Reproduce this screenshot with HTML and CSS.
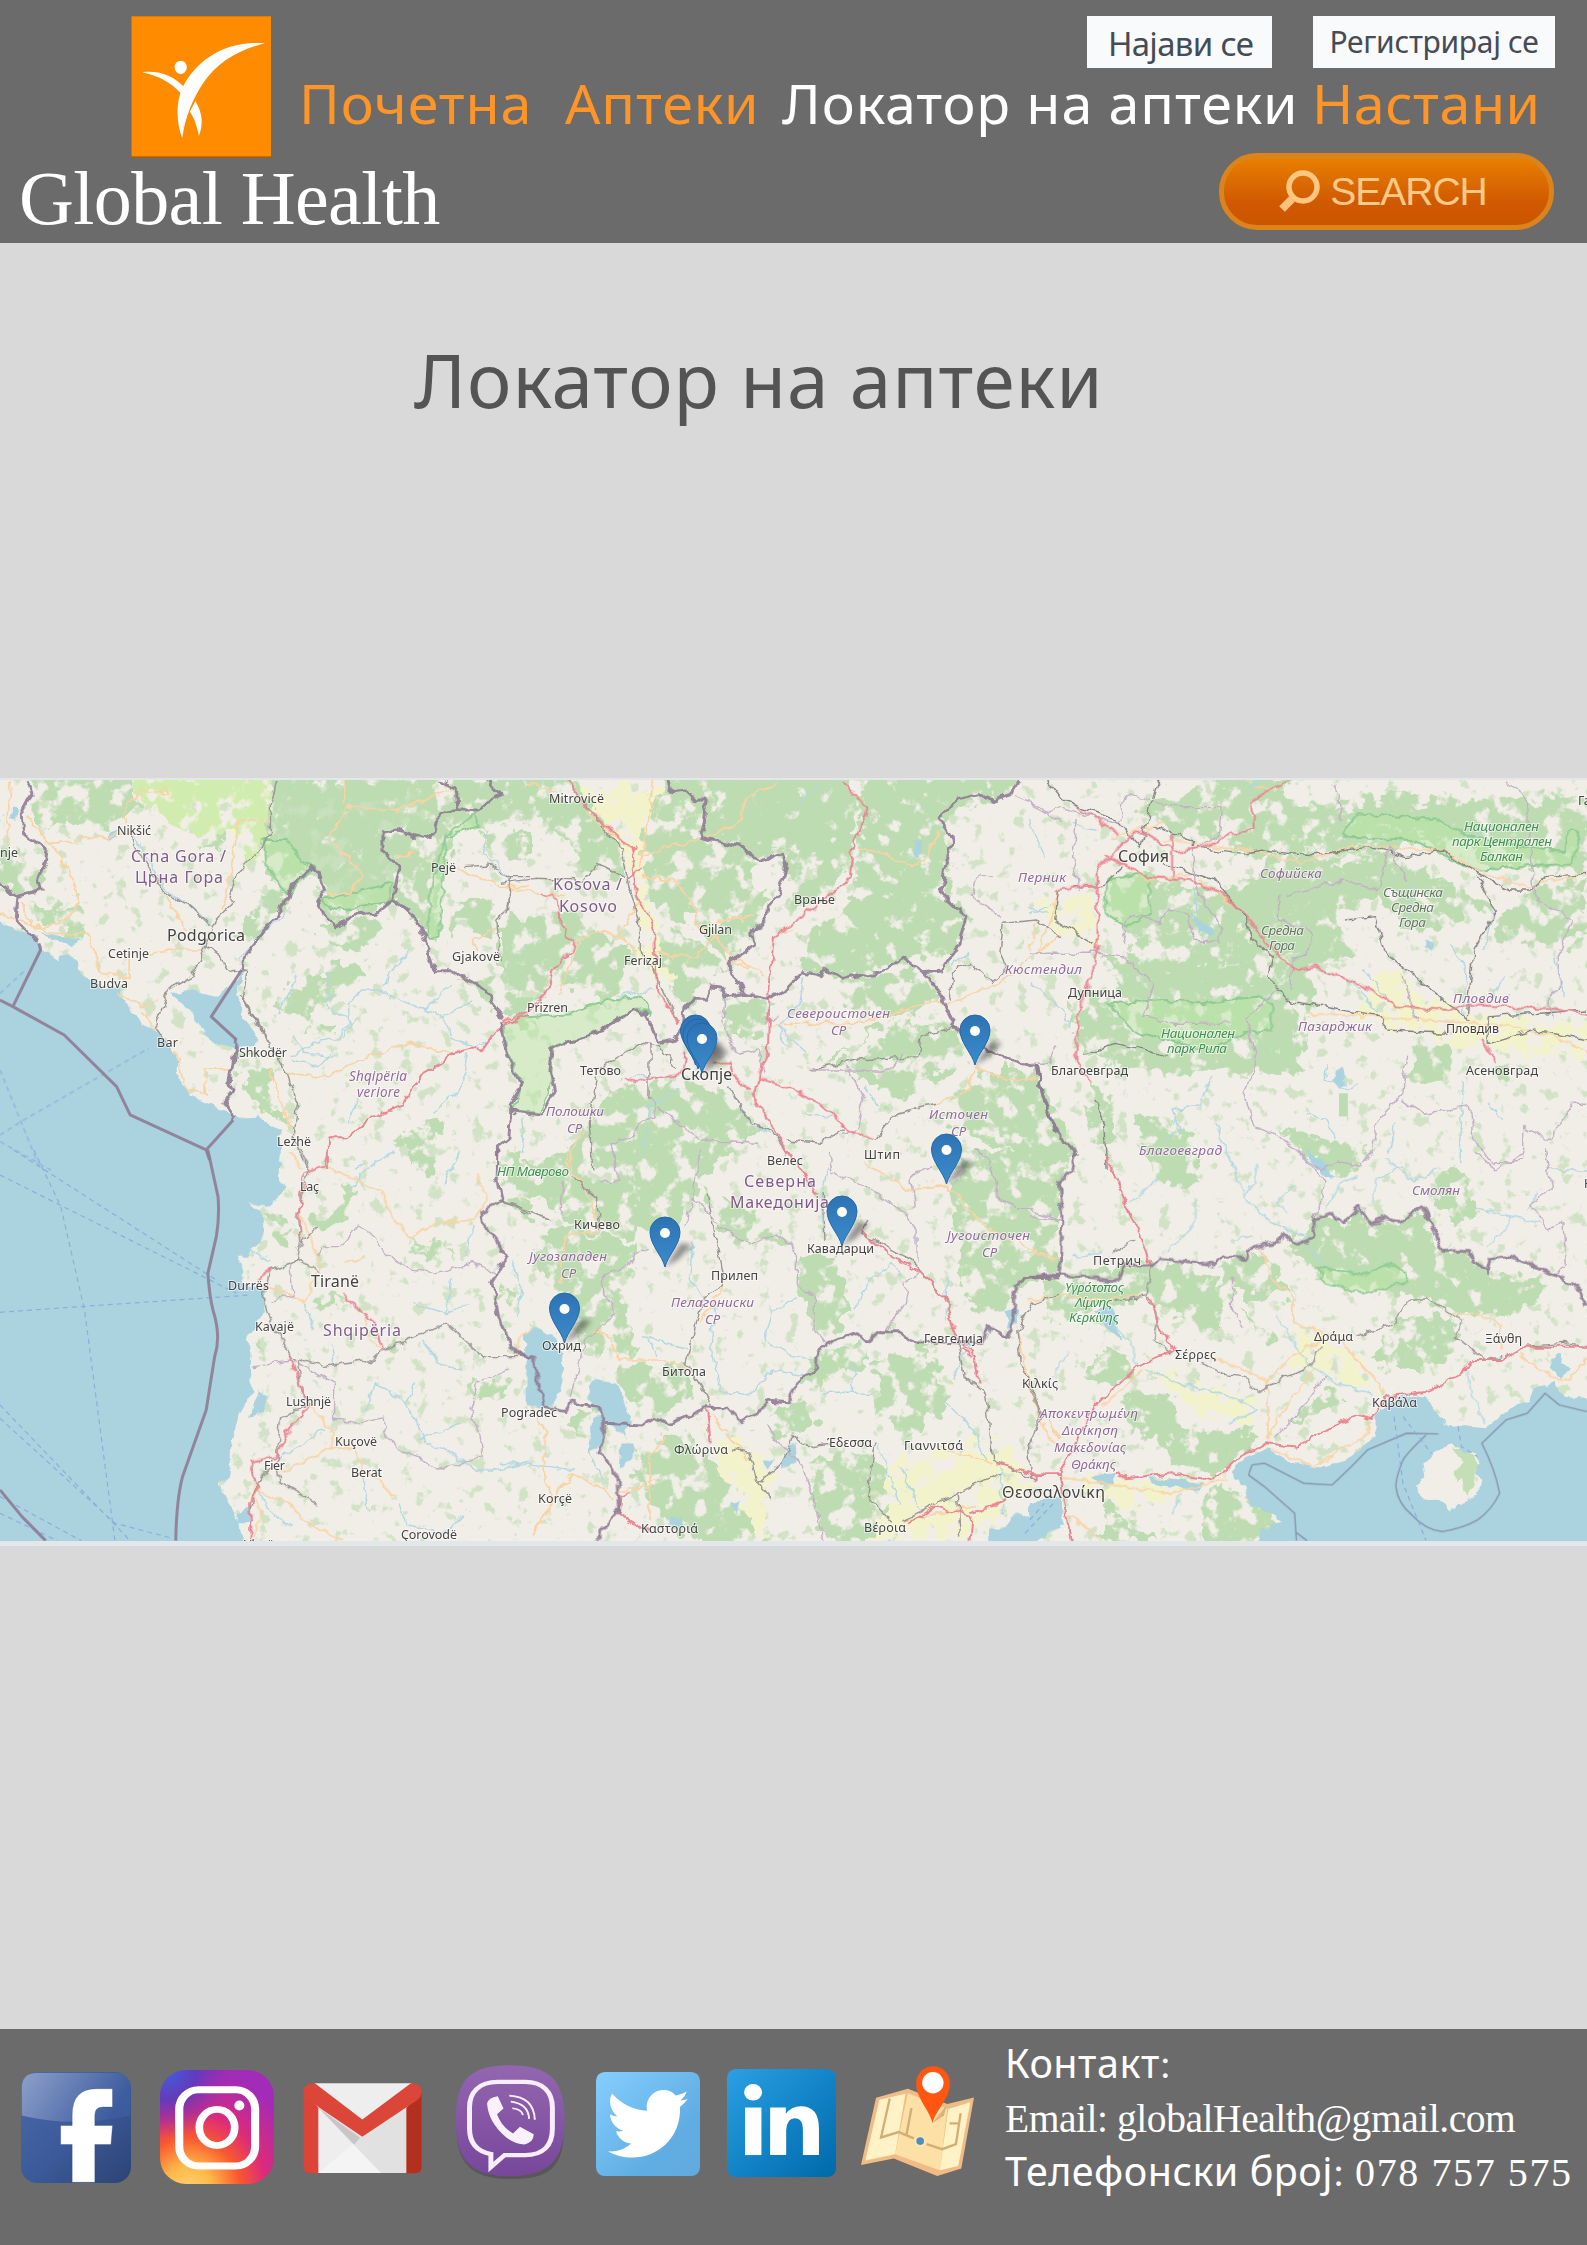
FILE: index.html
```html
<!DOCTYPE html>
<html lang="mk">
<head>
<meta charset="utf-8">
<title>Global Health – Локатор на аптеки</title>
<link rel="stylesheet" href="styles.css">
</head>
<body>
<header class="site-header">
  <div class="brand">
    <svg class="logo" viewBox="259 48 278 426" preserveAspectRatio="none">
      <rect x="259" y="48" width="278" height="426" fill="#a85d08"/>
      <rect x="260" y="49" width="275" height="420" fill="#ff8b00"/>
      <ellipse cx="357" cy="202" rx="12" ry="20" fill="#fff"/>
      <path d="M523 130C440 118 385 190 362 258C348 300 347 365 360 414C366 350 380 300 400 252C430 185 470 150 523 130Z" fill="#fff"/>
      <path d="M281 217C315 210 345 230 364 262L357 280C340 250 315 228 281 217Z" fill="#fff"/>
      <path d="M386 303C400 340 402 370 393 408C388 370 382 350 375 335Z" fill="#fff"/>
    </svg>
    <div class="brand-name">Global Health</div>
  </div>
  <div class="header-main">
    <div class="account"><a class="login">Најави се</a><a class="register">Регистрирај се</a></div>
    <nav class="nav"><a class="n1">Почетна</a><a class="n2">Аптеки</a><a class="n3 active">Локатор на аптеки</a><a class="n4">Настани</a></nav>
    <button class="search">
      <svg viewBox="0 0 42 43"><circle cx="25" cy="17" r="14" fill="none" stroke="#ffc681" stroke-width="5.5"/><path d="M14 29L4 39" stroke="#ffc27a" stroke-width="8"/></svg>
      <span>SEARCH</span>
    </button>
  </div>
</header>
<main>
  <h1>Локатор на аптеки</h1>
  <svg class="map" viewBox="0 778 1587 768">
    <defs>
      <filter id="rough" filterUnits="userSpaceOnUse" x="0" y="770" width="1587" height="780">
        <feTurbulence type="fractalNoise" baseFrequency=".06" numOctaves="3" seed="4" result="n"/>
        <feDisplacementMap in="SourceGraphic" in2="n" scale="30" xChannelSelector="R" yChannelSelector="G" result="d"/>
        <feTurbulence type="fractalNoise" baseFrequency=".055" numOctaves="5" seed="9"/>
        <feColorMatrix values="0 0 0 0 0  0 0 0 0 0  0 0 0 0 0  9 0 0 0 -3.3" result="h"/>
        <feComposite in="d" in2="h" operator="in"/>
      </filter>
      <filter id="dense" filterUnits="userSpaceOnUse" x="0" y="770" width="1587" height="780">
        <feTurbulence type="fractalNoise" baseFrequency=".09" numOctaves="3" seed="4" result="n"/>
        <feDisplacementMap in="SourceGraphic" in2="n" scale="22" xChannelSelector="R" yChannelSelector="G" result="d"/>
        <feTurbulence type="fractalNoise" baseFrequency=".06" numOctaves="5" seed="21"/>
        <feColorMatrix values="0 0 0 0 0  0 0 0 0 0  0 0 0 0 0  9 0 0 0 -2.7" result="h"/>
        <feComposite in="d" in2="h" operator="in"/>
      </filter>
      <filter id="specks" filterUnits="userSpaceOnUse" x="0" y="770" width="1587" height="780">
        <feTurbulence type="fractalNoise" baseFrequency=".07" numOctaves="4" seed="33"/>
        <feColorMatrix values="0 0 0 0 0  0 0 0 0 0  0 0 0 0 0  9 0 0 0 -5.5" result="h"/>
        <feComposite in="SourceGraphic" in2="h" operator="in"/>
      </filter>
      <filter id="wiggle" filterUnits="userSpaceOnUse" x="0" y="770" width="1587" height="780">
        <feTurbulence type="fractalNoise" baseFrequency=".09" numOctaves="2" seed="2"/>
        <feDisplacementMap in="SourceGraphic" scale="9" xChannelSelector="R" yChannelSelector="G"/>
      </filter>
      <linearGradient id="pinfill" x1="0" y1="0" x2="0" y2="1"><stop offset="0" stop-color="#2e73b4"/><stop offset="1" stop-color="#3a8ccb"/></linearGradient>
      <filter id="soft"><feGaussianBlur stdDeviation="2.5"/></filter>
      <g id="pin">
        <path d="M0 0L16-24L27-22L14-8Z" fill="#333" opacity=".5" filter="url(#soft)"/>
        <path d="M0 0C-3-12-15-22-15-35A15 15 0 0 1 15-35C15-22 3-12 0 0Z" fill="url(#pinfill)" stroke="#2567a5"/>
        <circle cy="-34" r="5" fill="#fff"/>
      </g>
    </defs>
    <rect y="778" width="1587" height="768" fill="#e3e7e9"/>
    <svg x="0" y="780" width="1587" height="761" viewBox="0 780 1587 761">
    <rect y="780" width="1587" height="761" fill="#f1eee8"/>
    <rect class="specks" y="775" width="1587" height="770" filter="url(#specks)"/>

    <g class="farm" filter="url(#rough)">
      <g transform="translate(0 770) scale(.338 .3333)"><path d="M400 30H800V180L700 200 560 160Z"/></g>
      <g transform="translate(500 770) scale(.3571 .3333)"><path d="M180 50L460 40 400 300 420 440 560 580 470 640 380 560 400 450 340 240Z"/></g>
      <g transform="translate(500 1150) scale(.3571 .3333)"><path d="M600 860L760 930 740 1172 640 1172ZM1050 950L1400 860 1500 1000 1300 1172 1000 1172Z"/></g>
      <g transform="translate(1030 770) scale(.3552 .3333)"><path d="M20 380L190 370 180 520 60 500ZM560 470L620 460 680 560 600 520ZM1000 600L1250 740 1568 760 1568 860 1250 830 900 740Z"/></g>
      <g transform="translate(1030 1150) scale(.3552 .3333)"><path d="M330 660L640 740 620 820 480 800ZM750 520L880 590 1000 740 850 690 740 640ZM100 980L500 1000 300 1080Z"/></g>
    </g>

    <g class="wood" filter="url(#rough)">
      <g transform="translate(0 770) scale(.338 .3333)">
        <path d="M90 10H390L400 110 330 170 260 180 200 150 120 190ZM0 230L80 250 130 300 110 350 50 375 0 330ZM700 500L760 400 850 330 840 410 760 510ZM850 650L1000 560 1090 620 900 740 800 700ZM1340 620L1568 640V770L1480 740 1400 650ZM1350 400L1470 380 1460 500 1330 520ZM680 850L770 860 800 950 850 1070 770 1010ZM1180 1100L1300 1050 1280 1180 1200 1170ZM540 150L640 140 660 240 590 240ZM920 760L990 750 980 790 930 790ZM930 480L1100 440 1130 530 1000 540ZM1420 180L1568 190V270L1470 250ZM90 400L250 400 260 500 140 480Z"/>
        <path class="pale" d="M390 10H800V190L740 280 690 170 600 240 540 170 420 120Z"/>
        <path d="M800 0H1568V150L1350 180 1310 300 1300 430 1290 520 1230 460 1170 390 1050 430 990 465 940 400 960 350 920 290 850 380 780 280 790 200Z"/>
      </g>
      <g transform="translate(0 1150) scale(.338 .3333)"><path d="M780 180L830 190 865 300 820 270ZM920 200L980 190 1030 100 1050 210 960 250ZM1475 30L1568 10V200L1500 170ZM1480 400L1520 400 1510 470 1480 450ZM740 550L770 620 750 610ZM1400 700L1500 680 1480 750 1400 740ZM920 440L1010 440 990 470 930 460ZM1200 290L1350 290 1330 340ZM1200 10L1290 40 1270 90ZM1140 570L1190 570 1180 600Z"/></g>
      <g transform="translate(500 770) scale(.3571 .3333)">
        <path d="M0 10H190L340 240 350 330 300 300 120 150 0 120ZM0 440L200 420 370 560 350 620 300 700 200 640 0 740ZM430 460L560 520 640 600 560 650 510 720 460 600ZM640 680L750 700 740 800 650 800ZM950 620L1180 610 1230 690 1160 740 960 700ZM900 880L1090 770 1270 770 1300 880 1180 950 1100 1000 1000 900ZM1380 900L1510 900 1568 1110V1210L1300 1080 1230 1050 1260 990ZM200 1210L200 1110 330 950 520 940 680 990 720 1100 560 1210ZM220 200L340 280 330 330 200 300ZM900 900L1080 820 1100 740Z"/>
        <path d="M400 230L470 0H950L1020 110 990 230 940 350 820 430 800 370 800 270 740 290 700 300 760 400 700 480 640 560 600 530 540 440 430 440Z"/>
      </g>
      <g transform="translate(500 1150) scale(.3571 .3333)"><path d="M0 80L200 0H560L540 180 380 260 200 240 60 110ZM140 230L400 280 330 460 400 610 260 620 170 480 90 300ZM340 640L530 650 520 760 400 800 330 720ZM200 760L280 780V890L210 850ZM560 100L830 280 720 290 600 230ZM830 310L930 310 970 470 940 550 880 540 840 440ZM890 600L1030 580 1040 640 900 700 830 770 830 720ZM1050 650L1200 580 1250 750 1150 860 1060 800ZM1260 110L1290 0 1568 10V360L1520 350 1440 450 1360 510 1270 390 1280 260ZM370 890L520 850 620 960 740 1190H560L400 1050ZM870 940L1000 900 1090 960 1060 1160 900 1190ZM830 760L880 780 860 850 700 840Z"/></g>
      <g transform="translate(1030 770) scale(.3552 .3333)">
        <path d="M0 900L30 930 130 1150 100 1210H0ZM280 110L450 70 530 20H735V110L960 80H1250L1270 220 900 240 620 260 530 220 400 180ZM1200 90L1568 80V300L1300 290 1200 200ZM1290 490L1380 370 1568 330V480L1500 540 1300 500ZM1060 830L1200 800 1180 930 1080 940ZM170 930L240 1000 230 1100 170 1120ZM1300 880L1370 900 1360 950 1310 930Z"/>
        <path d="M230 310L320 320 540 370 700 260 960 240 1200 340 1290 400 1100 490 970 380 860 440 930 560 800 570 790 700 760 910H300L160 850 110 760V690L280 690 200 570 300 560 260 450 210 400Z"/>
      </g>
      <g transform="translate(1030 1150) scale(.3552 .3333)"><path d="M0 0H115L80 100 85 300 0 250ZM20 385L320 345 430 350 570 420 540 510 400 500 330 440 50 520ZM520 320L650 300 740 430 620 460 550 400ZM1140 60L1240 60 1250 200 1200 210 1140 180ZM960 640L1040 500 1200 500V600L1100 680ZM160 600L270 620 280 700 180 700ZM740 810L830 720 890 750 760 810ZM490 1060L540 990 610 1040 710 1110 640 1190H500ZM200 1050L360 1172H200ZM440 500L540 510 520 580ZM580 480L700 560 680 600Z"/></g>
    </g>
    <g class="wood" filter="url(#dense)">
      <g transform="translate(0 770) scale(.338 .3333)"><path d="M810 60L1100 40 1290 60 1260 170 1130 190 1140 240 1180 290 1160 380 1050 420 960 400 950 330 900 280 830 240Z" opacity=".8"/></g>
      <g transform="translate(500 770) scale(.3571 .3333)"><path d="M1020 10L1450 10 1440 70 1250 130 1260 380 1310 440 1280 550 1150 570 960 620 850 600 850 500 990 390 1000 270ZM600 10L950 10 1000 110 970 210 900 220 800 230 680 220 590 170Z"/></g>
      <g transform="translate(1030 770) scale(.3552 .3333)"><path d="M540 380L700 300 850 290 960 260 1180 350 1000 370 860 400 800 460 860 560 660 540 560 430ZM640 700L750 700V910L640 900ZM330 590L600 590 630 680 350 660ZM760 130L950 110 1250 110 1260 220 900 150ZM290 1030L450 1080 460 1210H340ZM700 1060L830 1110 950 1120 930 1180 830 1200 740 1110Z"/></g>
      <g transform="translate(1030 1150) scale(.3552 .3333)"><path d="M800 210L850 195 880 225 930 180 960 225 1040 220 1100 180 1150 300 1240 310 1290 375 1450 390 1440 450 1350 490 1200 490 1070 430 940 430 830 390 730 300ZM300 -10L480 20V100L420 120 360 90ZM800 0H960L930 45 880 85 840 40ZM260 730L400 740 420 850 630 840 610 900 520 980 400 940 370 860 280 850Z"/></g>
    </g>
    <g class="wood"><g transform="translate(1030 770) scale(.3552 .3333)"><path d="M870 970H895V1040H870Z"/></g></g>
    <g class="park" filter="url(#wiggle)">
      <g transform="translate(500 770) scale(.3571 .3333)"><path d="M10 770L60 740 200 730 300 690 400 680 420 730 380 710 270 790 150 830 140 960 110 1030 40 1020 60 930 20 850Z"/></g>
      <g transform="translate(0 770) scale(.338 .3333)"><path d="M780 210L850 210 890 270 930 290 850 370 790 300ZM950 390L1160 340 1150 400 990 420ZM1320 190L1410 130 1410 170 1320 200 1300 500 1260 500 1280 330Z"/></g>
      <g transform="translate(1030 770) scale(.3552 .3333)"><path d="M215 330L330 310 340 430 270 470 210 430ZM220 700L380 690 480 700 640 680 680 700 680 780 600 790 500 840 300 790ZM880 190L920 130 1140 150 1240 200 1500 250 1520 180 1550 190 1530 280 1250 300 1080 210 900 200Z"/></g>
      <g transform="translate(1030 1150) scale(.3552 .3333)"><path d="M810 350L940 380 1000 345 1060 360 1060 400 940 430 830 400Z"/></g>
    </g>

    <g class="water" filter="url(#wiggle)">
      <g transform="translate(0 770) scale(.338 .3333)"><path d="M-30 440L60 480 110 500 120 540 170 570 200 550 230 565 235 610 300 650 355 655 370 700 430 770 470 785 520 850 530 930 560 975 640 1010 690 1045 760 1040 830 1085 825 1200H-30ZM505 670L560 660 640 680 680 650 720 600 700 680 720 740 755 790 755 828 690 835 640 820 600 790 560 720ZM110 490L200 500 240 510 210 525 150 505ZM320 190L350 180 345 205 320 205ZM35 110L55 120 50 160 35 140Z"/></g>
      <g transform="translate(0 1150) scale(.338 .3333)"><path d="M-30 -20H825L825 90 845 110 800 170 735 155 775 190 780 250 735 320 700 320 720 360 720 400 790 420 780 490 735 560 745 620 735 690 750 720 705 800 680 900 680 970 645 1005 690 1080 725 1200H-30ZM765 720L790 740 780 785 740 798ZM700 1085L745 1075 740 1120 700 1120Z"/></g>
      <g transform="translate(500 770) scale(.3571 .3333)"><path d="M1160 215L1182 210 1175 265 1158 262Z"/></g>
      <g transform="translate(500 1150) scale(.3571 .3333)"><path d="M70 545L100 537 150 560 175 610 172 700 150 765 110 775 72 765ZM245 725L265 690 325 700 350 750 370 820 350 855 300 820 245 745ZM262 800L290 795V880L245 905ZM340 880L375 880 370 930 335 960ZM800 895L825 878 830 940 790 955ZM740 930L765 935 745 960ZM1410 485L1450 470V515L1425 535ZM475 1110L510 1105 505 1130 478 1128ZM650 1060L680 1050 660 1085ZM1370 1195V1135L1420 1130 1430 1100 1500 1090 1520 1050 1568 1040V1130L1480 1195Z"/></g>
      <g transform="translate(1030 770) scale(.3552 .3333)"><path d="M450 430L520 480 515 500 475 488ZM850 935L880 890 890 940 870 962ZM1105 515L1140 520 1125 540ZM740 1135L830 1200H810Z"/></g>
      <g transform="translate(1030 1150) scale(.3552 .3333)"><path d="M0 1060L60 1040 92 1080 90 1120 50 1145H0ZM175 975L240 970V1000L200 1008ZM340 982L490 1000 480 1025 340 1000ZM570 960L600 930 665 895 720 930 810 955 900 920 970 860 970 800 1010 760 1050 740 1115 735 1150 800 1180 825 1280 835 1340 780 1400 760 1420 715 1480 695 1500 740 1600 750 1600 1200H640L650 1140 705 1115 620 1060 610 1010 575 990ZM1465 620L1490 615 1520 660 1500 680 1460 660ZM180 480L230 470 255 570 210 520ZM770 0L810 20 860 85 830 75Z"/><path class="isle" d="M1170 885L1210 890 1225 910 1250 905 1265 935 1250 950 1268 985 1258 1040 1215 1055 1185 1085 1160 1055 1110 1048 1090 1010 1110 980 1105 940 1140 910Z"/><path class="grove" d="M1190 895L1215 900 1250 915 1262 960 1255 1000 1240 1040 1220 1030 1215 990 1200 1000 1195 960 1215 940Z"/></g>
    </g>

    <g class="river" filter="url(#wiggle)">
      <g transform="translate(0 770) scale(.338 .3333)"><path d="M860 860L930 820 1000 800 1035 760 1030 700 1070 660 1130 660 1200 700 1260 720 1310 740 1330 800 1400 830 1440 820M1260 720L1330 640M1310 740L1400 690M970 600L975 720 1030 740M1130 650L1210 540M1440 180L1430 250 1510 320M1380 850L1370 950 1280 1030M1060 980L1030 1060M880 620L820 740M710 560L860 410M400 200L450 290 490 360 560 410 630 470M870 800L900 850 990 860M860 870L940 890 980 850M1060 740L1010 800"/></g>
      <g transform="translate(0 1150) scale(.338 .3333)"><path d="M1170 0L1080 60 1040 120M1360 0L1340 50 1310 110M1110 700L1180 740 1240 820 1260 880 1340 910 1400 960 1460 960 1568 940M1240 870L1360 820M1110 700L1080 790M1050 60L1080 40M1220 460L1320 490 1380 460M1330 380L1320 490M900 460L930 540M1400 230L1380 320M740 300L800 330M820 930L900 880 960 830M1200 760L1230 700M1070 980L1090 1080M750 1000L800 1080 860 1130M1180 1060L1200 1120 1320 1150 1370 1100M980 580L990 640M1250 570L1300 640 1360 660"/></g>
      <g transform="translate(500 770) scale(.3571 .3333)"><path d="M890 50L840 100M850 620L840 700 780 770 800 830M430 660L330 680M420 920L360 920M500 960L420 1010 400 1150M1480 150L1530 270M780 770L860 850M640 950L700 1060 760 1090M1020 950L1060 1010M1550 400L1480 430M60 1040L70 1150M850 1030L930 1040M1320 550L1260 580"/></g>
      <g transform="translate(500 1150) scale(.3571 .3333)"><path d="M920 50L900 150 905 250M540 280L530 390 600 480 590 600 620 730 700 740 760 660 860 680M740 570L760 480 830 450M740 570L820 620 880 630M990 480L1040 390 1100 340 1120 380M1250 380L1250 520M1370 540L1300 600 1270 690M900 730L1040 730M990 640L990 730M1060 880L1120 1070M1120 950L1180 1080M1240 750L1330 840 1360 930M400 560L520 600M420 570L440 620M30 330L60 420 50 500M1400 950L1410 1100M0 940L140 950 210 960M250 900L290 990"/></g>
      <g transform="translate(1030 770) scale(.3552 .3333)"><path d="M0 640L90 720 110 770M480 1000L400 1020 420 1080 380 1110M480 1000L510 920M840 880L830 930 890 960 920 940M780 1030L830 1050 860 1100M900 620L980 730M1000 680L940 600M1180 520L1230 600 1220 740M1300 420L1280 540M1250 200L1300 160M460 350L470 440M120 160L190 180M1080 340L1060 440M520 1060L580 1200M1480 560L1500 680M1220 930L1210 1180M1290 1000L1330 1050M1030 1060L1010 1150M0 410L50 430M1340 620L1290 700M620 60L640 30"/></g>
      <g transform="translate(1030 1150) scale(.3552 .3333)"><path d="M550 0L610 150 680 220 780 260M640 40L630 100 600 140M470 150L460 230 380 310M360 80L280 160M330 660L480 720 600 750 640 780M640 780L560 820M780 280L830 350M690 490L750 590 780 640 860 700 960 730M1230 660L1240 720 1280 820M1050 50L980 80 960 160M1250 170L1350 200 1330 250 1290 290M1350 200L1440 220M1400 180L1430 130M840 170L870 100 920 80M580 270L630 260M240 530L290 590 300 650M110 610L60 680M420 1030L400 1090M1000 30L1080 90 1150 60M720 190L700 150 740 110M1460 60H1568M200 310L120 320"/></g>
    </g>

    <g class="minor" filter="url(#wiggle)">
      <g transform="translate(0 770) scale(.338 .3333)"><path d="M80 140L150 220 310 200 400 190 M370 160L380 100 420 60 490 70 490 40M150 220L210 310 235 400 190 450 110 480 60 400M0 430L60 450 150 490 260 490 300 610 385 625 385 560M440 550L530 540 600 540M550 480L500 390 440 290M350 670L420 710 470 690M460 780L420 730M800 150L700 150 690 260 660 420M980 210L1070 310 1040 370 960 370M970 200L1030 110 1180 120 1330 60M1020 100L1020 30M850 910L970 920 1060 870 1210 820 1340 850M690 900L610 900 610 970 550 960M800 900L860 1080M520 840L550 960 610 970M1410 540L1400 510 1470 470M1350 290L1480 350 1568 350M1170 260L1230 250M30 30L20 220"/></g>
      <g transform="translate(0 1150) scale(.338 .3333)"><path d="M960 50L1060 90 1130 130 1160 200 1210 260 1290 220 1400 210 1440 150 1410 70M890 200L930 290 950 370M760 400L900 455 940 370M1080 500L1090 570 1130 600M910 760L990 850 980 890 830 970M980 890L1050 900 1080 960 1170 1040M760 1020L850 1060 900 1110 1010 1172M1020 340L1080 320M860 0L890 60M1530 620L1540 560 1568 540M750 1000L770 1100 750 1172"/></g>
      <g transform="translate(500 770) scale(.3571 .3333)"><path d="M0 350L100 370 180 380M430 30L410 200 390 290M400 260L460 230 560 210 670 160 690 80 780 40M400 320L490 330 540 400 555 470 600 500 550 560 430 550M600 460L710 430M210 520L290 480 330 500 370 430 390 400M330 500L380 540M600 500L650 560 740 620M1000 240L1080 250 1140 290 1190 270 1230 180M760 770L850 760 1000 760 1200 700 1260 700 1400 640 1568 490M640 570L700 600M170 670L210 520M1330 900L1310 960 1220 1000M1330 890L1450 940 1500 920M240 1080L190 1150 190 1200M780 490L820 480M240 130L380 250M80 40L160 70"/></g>
      <g transform="translate(500 1150) scale(.3571 .3333)"><path d="M200 0V70L240 110 280 240 180 260 165 400M1020 40L1140 120 1250 110 1370 240 1568 330M260 540L310 560 330 630 480 630 530 660M90 770L130 850 120 960 150 1050 90 1160M150 1040L200 970 280 1010 320 1050M590 790L640 860 700 930M460 860L420 920 420 1110M1250 900L1380 940M1330 1070L1130 1110M1450 540L1490 740 1568 870M630 400L560 520M330 1030L440 990"/></g>
      <g transform="translate(1030 770) scale(.3552 .3333)"><path d="M380 210L620 240 760 280 900 230 1160 240 1280 310 1400 350 1568 310M260 280L330 330 460 310M780 730L970 740 1250 760 1350 770 1480 800 1568 850M20 540L60 450 80 360M0 540L20 460M630 50L690 60M230 200L380 160M480 330L600 430"/></g>
      <g transform="translate(1030 1150) scale(.3552 .3333)"><path d="M0 300L70 330M0 450L100 430 150 450 320 440M650 290L690 400 740 430 740 520 830 550 860 550 1000 730M500 620L600 660 670 690 740 620 830 560M800 660L700 800 670 870M670 690L670 870M680 900L800 950 950 850 950 800M1170 490L1290 500 1330 530M1380 610L1460 680 1520 690 1568 620M0 720L50 860 90 890M80 980L200 1000 390 1030 550 990M320 660L260 720 200 770M90 1080L210 1172M1330 600L1320 530"/></g>
    </g>

    <g class="rail" filter="url(#wiggle)">
      <g transform="translate(0 770) scale(.338 .3333)"><path d="M820 30L800 100 800 190 760 250 700 310 680 380 690 400 640 450 600 550 570 620 500 660 460 770 500 830M390 190L400 230 490 370 560 410 620 470M610 530L650 560 680 610 730 600M710 680L780 790 850 910 880 1000 870 1110 910 1200M1370 290L1450 285 1510 320 1568 320M1510 320L1500 420 1470 450 1480 570M730 600L720 690 790 800"/></g>
      <g transform="translate(0 1150) scale(.338 .3333)"><path d="M890 0L915 60 880 200 890 270 880 330 800 360 780 430 790 490 860 620 960 650 1070 630 1090 640 1130 600 1200 570 1320 520 1430 620 1530 620M880 330L950 370M880 630L890 720 920 760 830 800 820 930 760 1000 740 1100M820 960L830 1000 940 1060M890 280L940 235M1490 155L1568 195"/></g>
      <g transform="translate(500 770) scale(.3571 .3333)"><path d="M200 50L340 240 390 470 390 540 430 600 500 760M0 340L100 325 230 330 270 280 350 320M30 330L20 430M640 950L700 1060 760 1080 800 1150M270 920L250 1060 260 1200M270 900L400 820 450 830 490 890M1050 1110L1110 1030 1220 1000M800 1110L900 1120 960 1080M420 820V990M1280 770L1180 800 1170 860 1000 870 870 900M1410 460L1400 540 1420 600 1380 640 1320 580 1270 600 1260 690M1410 460L1500 450 1568 500"/></g>
      <g transform="translate(500 1150) scale(.3571 .3333)"><path d="M200 80L270 140 280 240M580 130L630 400 570 440 520 640 600 780M650 900L700 910 720 1000 760 1050M720 1000L790 940 820 860 860 890 920 880M1050 880L1030 1040 1100 1120M1280 570L1300 680 1360 730 1380 930 1500 990M1400 970L1280 1030 1290 1160M1130 1110L1280 1030M1568 430L1490 460 1450 540 1460 640 1520 800 1480 890 1490 990M910 270L905 130M0 150L140 210M1030 210L1010 250 1150 330 1250 450"/></g>
      <g transform="translate(1030 770) scale(.3552 .3333)"><path class="dark" d="M50 30L95 90 240 150 310 230 360 30M370 280L520 330 610 450 620 500 680 560 670 620 720 690 980 740 1010 780 1170 790M470 230L600 250 660 240 800 255 950 230 1060 260 1160 240 1260 310 1350 360 1410 360 1450 320 1568 310M1230 750L1250 540 1310 420 1260 320M1290 740V820L1420 780 1568 810M150 850L240 820 390 860M180 990L210 1060 220 1200M460 230V210L350 170M80 360L70 450 180 520M1290 740L1568 720M120 350H200L260 290M890 450L970 440 1000 550 1150 680 1240 750"/></g>
      <g transform="translate(1030 1150) scale(.3552 .3333)"><path d="M340 350L330 440 360 500 350 570 400 610M240 455L330 440M480 640L550 670 610 680 640 730 720 680 780 660 820 590M920 560L1020 520 1070 450 1120 450 1220 510 1200 560 1280 630 1330 620M290 270L230 310M1390 590L1500 580 1568 590M0 720L30 790 0 890"/></g>
    </g>

    <g class="region" filter="url(#wiggle)">
      <g transform="translate(0 1150) scale(.338 .3333)"><path d="M940 320L950 290 1010 290 1060 225 1100 250 1140 310 1210 360 1280 370 1400 340 1470 380M750 650L880 630M880 640L990 700 990 810 1060 820 1130 800 1140 850 1180 900 1240 920 1290 960 1430 920 1420 850 1390 780 1410 700 1500 660M860 340L870 440 800 450"/></g>
      <g transform="translate(500 770) scale(.3571 .3333)"><path d="M630 680L620 750 660 850 720 840 740 910M970 890L1020 980 1000 1080 960 1090M420 970L440 1040 400 1050 370 1100 310 1120 330 1200M440 1010L560 1110 720 1120M1450 80L1510 110 1568 160M1380 320L1340 310 1320 380 1400 440M780 740L740 760M1130 850L1090 900 870 900"/></g>
      <g transform="translate(500 1150) scale(.3571 .3333)"><path d="M560 0L540 140 520 230M540 140L620 230 700 280 770 250 830 300 830 400 880 440 880 540 910 580M920 0L930 70 1030 110 1120 180 1165 240 1165 330M1180 370L1130 400 1140 450 1080 540M1160 170L1150 80 1210 50M1330 0L1370 30 1400 150 1480 180 1568 210M420 290L380 310 360 350 290 370 290 430 330 490 240 570 200 740M180 90L170 190M750 820L780 880 850 950 880 1060 910 1172M280 100L330 90 320 0"/></g>
      <g transform="translate(1030 770) scale(.3552 .3333)"><path d="M0 100L40 130 70 110 200 150 250 160 270 70 390 110 540 110 530 200 460 240 470 360 540 480 530 520 460 510 440 430 390 420 370 460 290 430 260 470 270 520M190 550L260 560 350 640 320 740 400 760 560 760M700 370L700 450 750 470 800 490 780 550 740 570 730 640 740 660M690 660L610 750 640 870 600 970 630 1070 700 1100 820 1200M860 40L880 150M720 380L880 330 980 360 1010 230 1060 340M1340 30L1400 90 1420 380 1530 450 1490 540 1490 650 1460 680 1470 740M1050 620L1090 760M1060 860L1050 970 980 1050 960 1150M1050 990L1110 1030 1240 1010 1250 1110 1300 1180 1390 1170 1390 1070 1460 1110M1460 1110L1530 1000 1568 1000M130 150L120 260 140 360M0 550L190 550M0 880L50 880 70 830"/></g>
      <g transform="translate(1030 1150) scale(.3552 .3333)"><path d="M750 0L830 90 820 160 800 200M820 60L870 30 930 50 960 0M1250 0L1310 60 1390 10M1450 0L1470 120 1410 160 1460 240 1500 220 1510 340 1480 380M570 380L570 480 600 530M0 200L80 210M830 680L760 780 690 860"/></g>
    </g>
    <g class="region">
      <g transform="translate(1030 1150) scale(.3552 .3333)"><path class="sealine" d="M1150 852L1060 850 950 900 900 955 850 1005 770 1000 660 940 625 945 615 975 660 1010 745 1090 750 1172M750 1148L780 1172M1115 855Q1060 910 1050 930Q1030 980 1030 1010Q1035 1060 1075 1095Q1115 1140 1160 1145Q1220 1135 1260 1110Q1300 1080 1322 1030Q1310 960 1272 880L1340 810 1400 790 1450 730 1490 765 1568 785"/></g>
    </g>

    <g class="motorway" filter="url(#wiggle)">
      <g transform="translate(0 770) scale(.338 .3333)"><path d="M970 1200V1105H1020L1100 1040 1190 1010 1240 920 1310 880 1340 850 1400 830 1420 850 1470 780 1568 730"/></g>
      <g transform="translate(0 1150) scale(.338 .3333)"><path d="M970 0L960 50 900 70 885 180 890 270M1010 430L1060 480 1110 520 1130 600M910 770L850 850 820 920 740 935 750 980 760 1020 740 1060 745 1172M860 620L900 740M800 360L760 390"/></g>
      <g transform="translate(500 770) scale(.3571 .3333)"><path d="M190 30L240 110 370 240 385 225M370 230L380 370 430 470 440 660 500 760M355 325L400 295M120 370L165 390 170 470 210 530 150 600 140 650 80 720 0 765M960 30L1030 115 990 220 980 320 930 370 770 500 755 650 750 850 720 930 710 980 760 1060 800 1150M350 920L380 940 420 925 510 915 520 840M600 880L645 880 650 910 700 965M720 920L830 960 920 1020 970 1080 1045 1110"/></g>
      <g transform="translate(500 1150) scale(.3571 .3333)"><path d="M800 0L890 130M1010 240L1070 300 1180 370 1250 450 1275 560 1330 620 1340 700M580 775L590 880M360 1030L340 1040 335 1090 420 1150M1390 940L1490 970 1568 970M1500 1000V970M1140 1120L1220 1070 1320 1100 1315 1172M1320 1090L1420 1050M1290 590L1320 620"/></g>
      <g transform="translate(1030 770) scale(.3552 .3333)"><path d="M740 30L650 70 625 100 630 180 570 190 500 230 410 245 370 220 330 190 290 190 250 230 230 260 190 290 190 520 175 610 135 740 130 860 170 940M210 255L330 320 450 330 540 370 620 450 670 530 750 600 800 590 920 640 1040 710 1180 720 1230 705 1470 715 1568 735M400 190V320M1270 800L1310 880M75 360L140 350 200 350M130 110L250 190"/></g>
      <g transform="translate(1030 1150) scale(.3552 .3333)"><path d="M215 20L290 210 340 345M340 440L360 520 405 600 300 650 180 770 130 880 80 970 100 1080 115 1172M0 972H85M240 970L270 985 400 970 510 990 560 950 590 920 665 880 750 890 850 830 920 800 960 810 1010 740 1130 720 1200 680 1250 630 1330 630 1390 590 1568 590"/></g>
    </g>

    <g class="ferry">
      <g transform="translate(0 770) scale(.338 .3333)"><path d="M0 670L75 600M0 900L120 1200M0 1095L70 1050 440 835M0 1115L150 1200"/></g>
      <g transform="translate(0 1150) scale(.338 .3333)"><path d="M40 0L640 390M0 75L700 430M0 487L235 470 740 435M100 0L180 170 250 480 340 1172M0 765L385 1172M0 805L340 1120 510 1165M0 1040L240 1172M0 1090L170 1172"/></g>
      <g transform="translate(1030 1150) scale(.3552 .3333)"><path d="M1025 800L1050 1000 1115 1172M1050 800L1130 910M1205 830L1215 890 1260 920M0 1110L40 1060"/></g>
      <g transform="translate(500 1150) scale(.3571 .3333)"><path d="M1470 1150L1550 1060"/></g>
    </g>

    <g class="border">
      <g transform="translate(0 1150) scale(.338 .3333)"><path d="M615 0L645 140Q650 200 640 260L615 370Q620 440 630 480Q655 560 635 620L610 780 540 980Q522 1050 520 1172M0 1020L65 1100 135 1172"/></g>
      <g transform="translate(0 770) scale(.338 .3333)"><path d="M115 520L120 540 38 710M0 690L38 710 190 795 345 950 385 1035 610 1140 620 1170M610 1140L690 1050M700 810L625 740 715 600"/></g>
    </g>
    <g class="border" filter="url(#wiggle)">
      <g transform="translate(0 770) scale(.338 .3333)"><path d="M80 30L95 75 65 120 70 190 140 240 130 290 115 320 125 360 50 380 45 450 115 520M0 335L50 380M690 1050L665 995 690 960 680 940 700 810M715 600L730 550 800 460 850 390 860 350 920 290 945 310 960 360 940 390 955 430 995 470 1050 435 1115 430 1165 388 1175 320 1185 290 1130 240 1130 185 1180 180 1250 205 1290 190 1300 135 1350 120 1415 120 1480 75 1440 30M1295 30L1350 55 1355 120M1165 388L1225 440 1255 500 1285 605 1340 605 1440 660 1490 750"/></g>
      <g transform="translate(0 1150) scale(.338 .3333)"><path d="M1470 0L1468 80 1490 155 1425 185 1430 220 1470 270 1495 320 1465 380 1455 400 1475 500 1520 600 1568 620"/></g>
      <g transform="translate(500 770) scale(.3571 .3333)"><path d="M465 30L480 65 520 60 550 90 580 90 570 170 560 205 680 230 725 280 790 250 805 300 780 370 750 410 745 440 705 490 715 530 645 570 645 610 675 640 685 670 630 680 625 655 590 650 580 685 545 685 515 720 510 770 490 810 450 820 435 800 410 730 375 715 330 750 270 790 190 815 145 840 140 900 155 960 130 1010 120 1035 75 1030 30 1020 25 1100 -10 1130V1160M0 760L20 860 60 940 30 1000 45 1035M685 670L750 685 800 660 850 605 900 620 910 590 960 625 1060 610 1130 565 1180 605 1240 600 1250 570 1280 540 1305 440 1235 370 1250 270 1270 210 1230 140 1290 85 1340 70 1380 90 1435 70 1450 30M1180 605L1230 660 1250 715 1285 790 1370 840 1430 870 1505 890 1520 980 1560 1090"/></g>
      <g transform="translate(500 1150) scale(.3571 .3333)"><path d="M40 610L90 620 125 770 185 785 200 755 280 775 290 820 400 825 430 805 470 820 530 800 575 770 640 775 675 815 735 780 745 750 810 755 825 710 885 650 890 600 930 575 990 550 1030 575 1060 545 1120 545 1165 575 1350 580 1370 525 1415 560 1435 540 1440 410 1470 385 1568 380M290 820V880L280 905 330 980 335 1080 280 1140 275 1172"/></g>
      <g transform="translate(1030 770) scale(.3552 .3333)"><path d="M20 885L35 970 80 1100 125 1140 130 1160"/></g>
      <g transform="translate(1030 1150) scale(.3552 .3333)"><path d="M130 10L115 60 80 100 90 200 85 375 0 380M85 375L250 390 265 345 345 345 370 325 520 345 545 320 610 325 630 290 700 275 710 250 745 285 800 265V205L850 190 880 220 930 170 960 220 1000 205 1040 215 1100 170 1120 195 1155 300 1230 305 1285 370 1295 325 1350 320 1490 380 1550 420 1562 470"/></g>
    </g>

    <g class="city">
      <text x="117" y="835" textLength="34">Nikšić</text><text x="0" y="857" textLength="18">nje</text><text x="108" y="958" textLength="41">Cetinje</text><text x="90" y="988" textLength="38">Budva</text><text x="157" y="1047" textLength="21">Bar</text><text x="239" y="1057" textLength="48">Shkodër</text><text x="277" y="1146" textLength="34">Lezhë</text><text x="431" y="872" textLength="25">Pejë</text><text x="452" y="961" textLength="48">Gjakovë</text><text x="300" y="1191" textLength="19">Laç</text><text x="228" y="1290" textLength="41">Durrës</text><text x="255" y="1331" textLength="39">Kavajë</text><text x="286" y="1406" textLength="45">Lushnjë</text><text x="335" y="1446" textLength="42">Kuçovë</text><text x="264" y="1470" textLength="21">Fier</text><text x="351" y="1477" textLength="31">Berat</text><text x="401" y="1539" textLength="56">Çorovodë</text><text x="244" y="1549" textLength="30">Vlorë</text>
      <text x="549" y="803" textLength="55">Mitrovicë</text><text x="699" y="934" textLength="33">Gjilan</text><text x="624" y="965" textLength="38">Ferizaj</text><text x="527" y="1012" textLength="41">Prizren</text><text x="794" y="904" textLength="41">Врање</text><text x="580" y="1075" textLength="41">Тетово</text><text x="767" y="1165" textLength="36">Велес</text><text x="864" y="1159" textLength="36">Штип</text><text x="574" y="1229" textLength="46">Кичево</text><text x="711" y="1280" textLength="47">Прилеп</text><text x="807" y="1253" textLength="67">Кавадарци</text><text x="542" y="1350" textLength="39">Охрид</text><text x="662" y="1376" textLength="44">Битола</text><text x="924" y="1343" textLength="59">Гевгелија</text><text x="501" y="1417" textLength="56">Pogradec</text><text x="674" y="1454" textLength="54">Φλώρινα</text><text x="827" y="1447" textLength="45">Έδεσσα</text><text x="904" y="1450" textLength="59">Γιαννιτσά</text><text x="1022" y="1388" textLength="36">Κιλκίς</text><text x="538" y="1503" textLength="34">Korçë</text><text x="641" y="1533" textLength="57">Καστοριά</text><text x="864" y="1532" textLength="42">Βέροια</text>
      <text x="1068" y="997" textLength="54">Дупница</text><text x="1051" y="1075" textLength="77">Благоевград</text><text x="1446" y="1033" textLength="53">Пловдив</text><text x="1466" y="1075" textLength="72">Асеновград</text><text x="1578" y="805">Га</text><text x="1584" y="1188">К</text><text x="1093" y="1265" textLength="48">Петрич</text><text x="1314" y="1341" textLength="39">Δράμα</text><text x="1175" y="1359" textLength="41">Σέρρες</text><text x="1485" y="1343" textLength="37">Ξάνθη</text><text x="1372" y="1407" textLength="45">Καβάλα</text>
    </g>
    <g class="city big">
      <text x="167" y="941" textLength="78">Podgorica</text><text x="311" y="1287" textLength="48">Tiranë</text><text x="681" y="1080" textLength="51">Скопје</text><text x="1118" y="862" textLength="51">София</text><text x="1002" y="1498" textLength="103">Θεσσαλονίκη</text>
    </g>
    <g class="country">
      <text x="131" y="862" textLength="95">Crna Gora /</text><text x="135" y="883" textLength="88">Црна Гора</text><text x="323" y="1336" textLength="78">Shqipëria</text><text x="553" y="890" textLength="69">Kosova /</text><text x="559" y="912" textLength="58">Kosovo</text><text x="744" y="1187" textLength="72">Северна</text><text x="730" y="1208" textLength="99">Македонија</text>
    </g>
    <g class="area">
      <text x="349" y="1081" textLength="58">Shqipëria</text><text x="357" y="1097" textLength="43">veriore</text><text x="787" y="1018" textLength="103">Североисточен</text><text x="831" y="1035">СР</text><text x="546" y="1116" textLength="58">Полошки</text><text x="567" y="1133">СР</text><text x="929" y="1119" textLength="59">Источен</text><text x="951" y="1136">СР</text><text x="529" y="1261" textLength="78">Југозападен</text><text x="561" y="1278">СР</text><text x="671" y="1307" textLength="83">Пелагониски</text><text x="705" y="1324">СР</text><text x="947" y="1240" textLength="83">Југоисточен</text><text x="982" y="1257">СР</text><text x="1018" y="882" textLength="48">Перник</text><text x="1260" y="878" textLength="62">Софийска</text><text x="1005" y="974" textLength="77">Кюстендил</text><text x="1453" y="1003" textLength="56">Пловдив</text><text x="1298" y="1031" textLength="74">Пазарджик</text><text x="1139" y="1155" textLength="83">Благоевград</text><text x="1412" y="1195" textLength="48">Смолян</text><text x="1040" y="1418" textLength="98">Αποκεντρωμένη</text><text x="1062" y="1435" textLength="56">Διοίκηση</text><text x="1054" y="1452" textLength="72">Μακεδονίας</text><text x="1071" y="1469" textLength="45">Θράκης</text>
    </g>
    <g class="area green">
      <text x="497" y="1176" textLength="72">НП Маврово</text><text x="1464" y="831" textLength="75">Национален</text><text x="1452" y="846" textLength="100">парк Централен</text><text x="1480" y="861" textLength="43">Балкан</text><text x="1161" y="1038" textLength="74">Национален</text><text x="1167" y="1053" textLength="60">парк Рила</text><text x="1065" y="1292" textLength="59">Υγρότοπος</text><text x="1075" y="1307" textLength="37">Λίμνης</text><text x="1069" y="1322" textLength="50">Κερκίνης</text>
    </g>
    <g class="area grey">
      <text x="1383" y="897" textLength="60">Същинска</text><text x="1391" y="912" textLength="43">Средна</text><text x="1399" y="927" textLength="27">Гора</text><text x="1261" y="935" textLength="43">Средна</text><text x="1269" y="950" textLength="26">Гора</text>
    </g>
    <use href="#pin" x="695.5" y="1065"/><use href="#pin" x="698" y="1069"/><use href="#pin" x="702" y="1073"/><use href="#pin" x="975" y="1065"/><use href="#pin" x="946.5" y="1184"/><use href="#pin" x="842" y="1246"/><use href="#pin" x="665" y="1267"/><use href="#pin" x="564.5" y="1343"/>
    </svg>
  </svg>
</main>
<footer class="site-footer">
  <div class="social">
    <svg class="facebook" viewBox="55 157 286 332" preserveAspectRatio="none">
      <defs><linearGradient id="fb" x1="0" y1="0" x2="1" y2="1"><stop offset="0" stop-color="#4a6aa8"/><stop offset=".55" stop-color="#3b5998"/><stop offset="1" stop-color="#2d4373"/></linearGradient><linearGradient id="fbg" x1="0" y1="0" x2="1" y2=".3"><stop offset="0" stop-color="#8ea0ca"/><stop offset="1" stop-color="#3c5c9e"/></linearGradient></defs>
      <rect x="55" y="157" width="286" height="332" rx="42" ry="48" fill="url(#fb)"/>
      <path d="M57 287V205Q57 160 97 160H299Q339 160 339 205V287Q190 325 57 287Z" fill="url(#fbg)"/>
      <path d="M188 487V374H158V317H188V285Q188 207 250 207H293V262H268Q247 262 247 285V317H293L289 374H247V487Z" fill="#fff" stroke="#31497f" stroke-width="1"/>
    </svg>
    <svg class="instagram" viewBox="418 151 296 341" preserveAspectRatio="none">
      <defs><radialGradient id="ig" cx=".25" cy="1.05" r="1.05"><stop offset="0" stop-color="#ffd070"/><stop offset=".2" stop-color="#ffb94a"/><stop offset=".43" stop-color="#f9592f"/><stop offset=".65" stop-color="#dc2a7b"/><stop offset="1" stop-color="#a22bb8"/></radialGradient><radialGradient id="igb" cx=".05" cy="0" r=".6"><stop offset="0" stop-color="#3d62e0"/><stop offset=".45" stop-color="#553dc0" stop-opacity=".85"/><stop offset="1" stop-color="#8a2fb0" stop-opacity="0"/></radialGradient></defs>
      <rect x="418" y="151" width="296" height="341" rx="68" ry="78" fill="url(#ig)"/><rect x="418" y="151" width="296" height="341" rx="68" ry="78" fill="url(#igb)"/>
      <rect x="468" y="210" width="197" height="228" rx="50" ry="58" fill="none" stroke="#fff" stroke-width="21"/>
      <ellipse cx="566" cy="323" rx="46" ry="54" fill="none" stroke="#fff" stroke-width="20"/><ellipse cx="624" cy="257" rx="13" ry="15" fill="#fff"/>
    </svg>
    <svg class="gmail" viewBox="791 188 311 272" preserveAspectRatio="none">
      <path d="M820 189H1075V457H820Z" fill="#eee"/><path d="M831 260L990 457H1061V260L946 350Z" fill="#e1e1e1"/><path d="M831 262L925 372 940 352Z" fill="#c6c6c6"/><path d="M831 457L922 370 995 457Z" fill="#f4f4f4"/>
      <path d="M792 215L831 262V458H815Q792 458 792 438Z" fill="#db4437"/><path d="M1101 215L1061 262V458H1080Q1101 458 1101 438Z" fill="#b3301e"/>
      <path d="M792 215Q792 189 822 189L946 297 1073 189Q1101 189 1101 215Q1101 230 1088 240L946 349 806 240Q792 230 792 215Z" fill="#dc4639"/>
    </svg>
    <svg class="viber" viewBox="1188 134 288 346" preserveAspectRatio="none">
      <defs><linearGradient id="vb" x1="0" y1="0" x2="0" y2="1"><stop offset="0" stop-color="#9366b0"/><stop offset="1" stop-color="#77479a"/></linearGradient></defs>
      <path d="M1192 325C1192 200 1230 146 1331 146S1473 200 1473 325 1430 477 1331 477 1192 430 1192 325Z" fill="#333" opacity=".35"/>
      <path d="M1190 300C1190 175 1230 135 1331 135S1475 175 1475 300 1430 468 1331 468 1190 425 1190 300Z" fill="url(#vb)"/>
      <path d="M1300 185H1372C1418 185 1443 215 1443 262V325C1443 378 1418 405 1372 405H1318L1282 441V402C1245 394 1226 370 1226 325V262C1226 215 1252 185 1300 185Z" fill="none" stroke="#f7eefb" stroke-width="13"/>
      <path d="M1272 250Q1275 232 1300 228L1315 265 1298 282Q1310 320 1340 340L1358 320 1394 342Q1395 365 1370 373Q1345 372 1320 350Q1275 305 1272 250Z" fill="#f9f2fc"/>
      <path d="M1330 226Q1395 230 1397 299M1334 244Q1380 250 1382 296M1338 264Q1362 266 1366 285" fill="none" stroke="#f9f2fc" stroke-width="5"/>
    </svg>
    <svg class="twitter" viewBox="108 155 312 311" preserveAspectRatio="none">
      <defs><linearGradient id="tw" x1="0" y1="0" x2="1" y2="1"><stop offset="0" stop-color="#85ceff"/><stop offset=".7" stop-color="#60ade3"/><stop offset="1" stop-color="#62aade"/></linearGradient></defs>
      <rect x="108" y="155" width="312" height="311" rx="26" fill="url(#tw)"/>
      <path d="M383 236C376 246 369 253 360 259C364 355 290 411 218 411C190 411 165 404 144 392C169 394 192 388 213 369C190 366 174 352 168 332C176 334 184 333 190 331C166 323 151 305 150 281C157 285 165 287 172 287C149 268 145 240 156 219C184 251 220 268 261 271C255 234 281 209 311 209C326 209 338 215 347 225C359 223 370 218 380 213C377 224 370 232 361 240C369 240 376 238 383 236Z" fill="#fff"/>
    </svg>
    <svg class="linkedin" viewBox="503 146 326 325" preserveAspectRatio="none">
      <defs><linearGradient id="li" x1="0" y1="0" x2="1" y2="1"><stop offset="0" stop-color="#2ba0e4"/><stop offset=".5" stop-color="#1384c8"/><stop offset="1" stop-color="#0069a9"/></linearGradient></defs>
      <rect x="503" y="146" width="326" height="325" rx="26" fill="url(#li)"/>
      <ellipse cx="581" cy="216" rx="27" ry="25" fill="#fff"/><rect x="557" y="262" width="49" height="143" fill="#fff"/>
      <path d="M632 262H679V281Q695 258 724 258Q778 258 778 325V405H730V330Q730 294 706 294T680 330V405H632Z" fill="#fff"/>
    </svg>
    <svg class="places" viewBox="902 137 338 328" preserveAspectRatio="none">
      <path d="M947 232L1042 205 1160 250 1240 231 1202 443 1130 465 1000 413 902 432Z" fill="#f0bc85"/>
      <path d="M957 238L1035 220 1004 400 915 419Z" fill="#fff2c6"/><path d="M1042 218L1160 265 1138 448 1004 400Z" fill="#fde0a6"/><path d="M1163 265L1229 245 1193 435 1138 448Z" fill="#fff2c6"/>
      <path d="M988 234L962 350 1015 334 1060 353M1053 262L1038 343M1098 370L1145 385 1186 370 1200 278M1167 308H1196" fill="none" stroke="#d2ae74" stroke-width="7"/>
      <circle cx="1079" cy="361" r="17" fill="#fbe5b5"/><circle cx="1079" cy="361" r="11.500" fill="#4a90ba"/>
      <path d="M1116 307L1160 250 1150 285Z" fill="#d9b27c"/><path d="M1116 307C1105 265 1067 235 1067 188A50 50 0 0 1 1168 188C1168 235 1128 265 1116 307Z" fill="#ff5612"/><circle cx="1117" cy="187" r="32" fill="#fff"/>
    </svg>
  </div>
  <address class="contact">
    <p class="c1">Контакт<i>:</i></p>
    <p class="c2">Email: globalHealth@gmail.com</p>
    <p class="c3">Телефонски број<i>: </i><b>078 757 575</b></p>
  </address>
</footer>
</body>
</html>
```
FILE: styles.css
```css
* { box-sizing: border-box; }
body { margin: 0; width: 1587px; height: 2245px; display: flex; flex-direction: column; overflow: hidden; background: #d9d9d9; font-family: "Noto Sans", sans-serif; font-feature-settings: "locl" 0; }
svg { display: block; flex: none; }

.site-header { height: 243px; flex: none; background: #6b6b6b; display: flex; }
.brand { width: 290px; flex: none; padding-top: 16px; }
.logo { width: 141px; height: 142px; margin-left: 131px; }
.brand-name { margin: -2px 0 0 19px; font: 76px/84px "Liberation Serif", serif; letter-spacing: -.6px; color: #fff; white-space: nowrap; }
.header-main { flex: 1; display: flex; flex-direction: column; align-items: flex-end; padding: 16px 32px 0 0; }
.account { display: flex; gap: 41px; height: 52px; }
.account a { background: #f8fafc; color: #454c55; height: 52px; text-align: center; white-space: nowrap; }
.login { width: 185px; font-size: 33px; line-height: 55px; letter-spacing: -.7px; padding-left: 2px; }
.register { width: 242px; font-size: 30px; line-height: 51px; letter-spacing: -.3px; }
.nav { align-self: stretch; display: flex; height: 75px; font-size: 55.6px; line-height: 75px; letter-spacing: .9px; color: #ff9527; white-space: nowrap; margin-top: -3px; }
.nav a { flex: none; }
.n1 { width: 275px; padding-left: 9px; }
.n2 { width: 217px; }
.n3 { width: 530px; }
.nav .n4 { letter-spacing: .5px; }
.nav .active { color: #fff; }
.search { width: 335px; height: 77px; margin: 13px 1px 0 0; padding: 0 8px 0 0; border: 5px solid #dc841c; border-radius: 38px; background: linear-gradient(#e88000, #d05a02 65%, #cc5500); display: flex; align-items: center; justify-content: center; gap: 10px; font: 39px/1 "Liberation Sans", sans-serif; letter-spacing: -1px; color: #ffc988; }
.search svg { width: 42px; height: 43px; }

main { height: 1786px; flex: none; }
h1 { margin: 0; padding: 85px 0 0 414px; height: 535px; font-size: 74.7px; line-height: 102px; letter-spacing: .95px; font-weight: 400; color: #545454; white-space: nowrap; }
.map { width: 1587px; height: 768px; }

.map path { vector-effect: non-scaling-stroke; }
.specks { fill: #c3ddb6; fill-opacity: .7; }
.farm { fill: #f3f3cb; }
.wood { fill: #bddcb1; }
.wood .pale { fill: #d0edaf; }
.park { fill: #b9e6a4; fill-opacity: .45; stroke: #8fcb93; stroke-width: 2; }
.water { fill: #aad3df; }
.water .isle { fill: #f1eee8; }
.water .grove { fill: #c4dfb5; }
.river, .minor, .rail, .region, .motorway, .ferry, .border { fill: none; stroke-linejoin: round; }
.river { stroke: #b3d8e2; stroke-width: 1.4; }
.minor { stroke: #f9d3a4; stroke-width: 1.7; }
.rail { stroke: #999693; stroke-width: 1.4; }
.rail .dark { stroke: #858483; }
.region { stroke: #c3b1c6; stroke-width: 1.4; }
.region .sealine { stroke: #8792ad; }
.motorway { stroke: #e98792; stroke-width: 2; }
.ferry { stroke: #8caedb; stroke-width: 1.2; stroke-dasharray: 5 4; }
.border { stroke: #8f7c94; stroke-width: 3; stroke-opacity: .9; }
.city, .country, .area { font-size: 12.5px; fill: #444241; stroke: #fff; stroke-opacity: .6; stroke-width: 2; paint-order: stroke; }
.city.big { font-size: 16px; }
.country { font-size: 16px; fill: #7f5a87; }
.area { font-size: 13.5px; font-style: italic; fill: #906a99; }
.area.green { fill: #40904f; }
.area.grey { fill: #667663; }

.site-footer { height: 216px; flex: none; background: #6b6b6b; display: flex; color: #fff; }
.social { width: 1005px; flex: none; display: flex; align-items: flex-start; padding-left: 21px; }
.facebook { width: 110px; height: 111px; margin-top: 43px; }
.instagram { width: 114px; height: 114px; margin: 41px 0 0 29px; }
.gmail { width: 119px; height: 91px; margin: 54px 0 0 29px; }
.viber { width: 110px; height: 115px; margin: 36px 0 0 33px; }
.twitter { width: 104px; height: 104px; margin: 43px 0 0 31px; }
.linkedin { width: 109px; height: 108px; margin: 40px 0 0 27px; }
.places { width: 113px; height: 110px; margin: 37px 0 0 25px; }
.contact { font-style: normal; white-space: nowrap; padding-top: 7px; }
.contact p { margin: 0; height: 54px; line-height: 54px; font-size: 39.5px; letter-spacing: .5px; }
.contact i, .contact b { font: 40px/54px "Liberation Serif", serif; }
.contact b { letter-spacing: 1.6px; }
.contact .c2 { font: 39.5px/58px "Liberation Serif", serif; letter-spacing: -.45px; }
```
